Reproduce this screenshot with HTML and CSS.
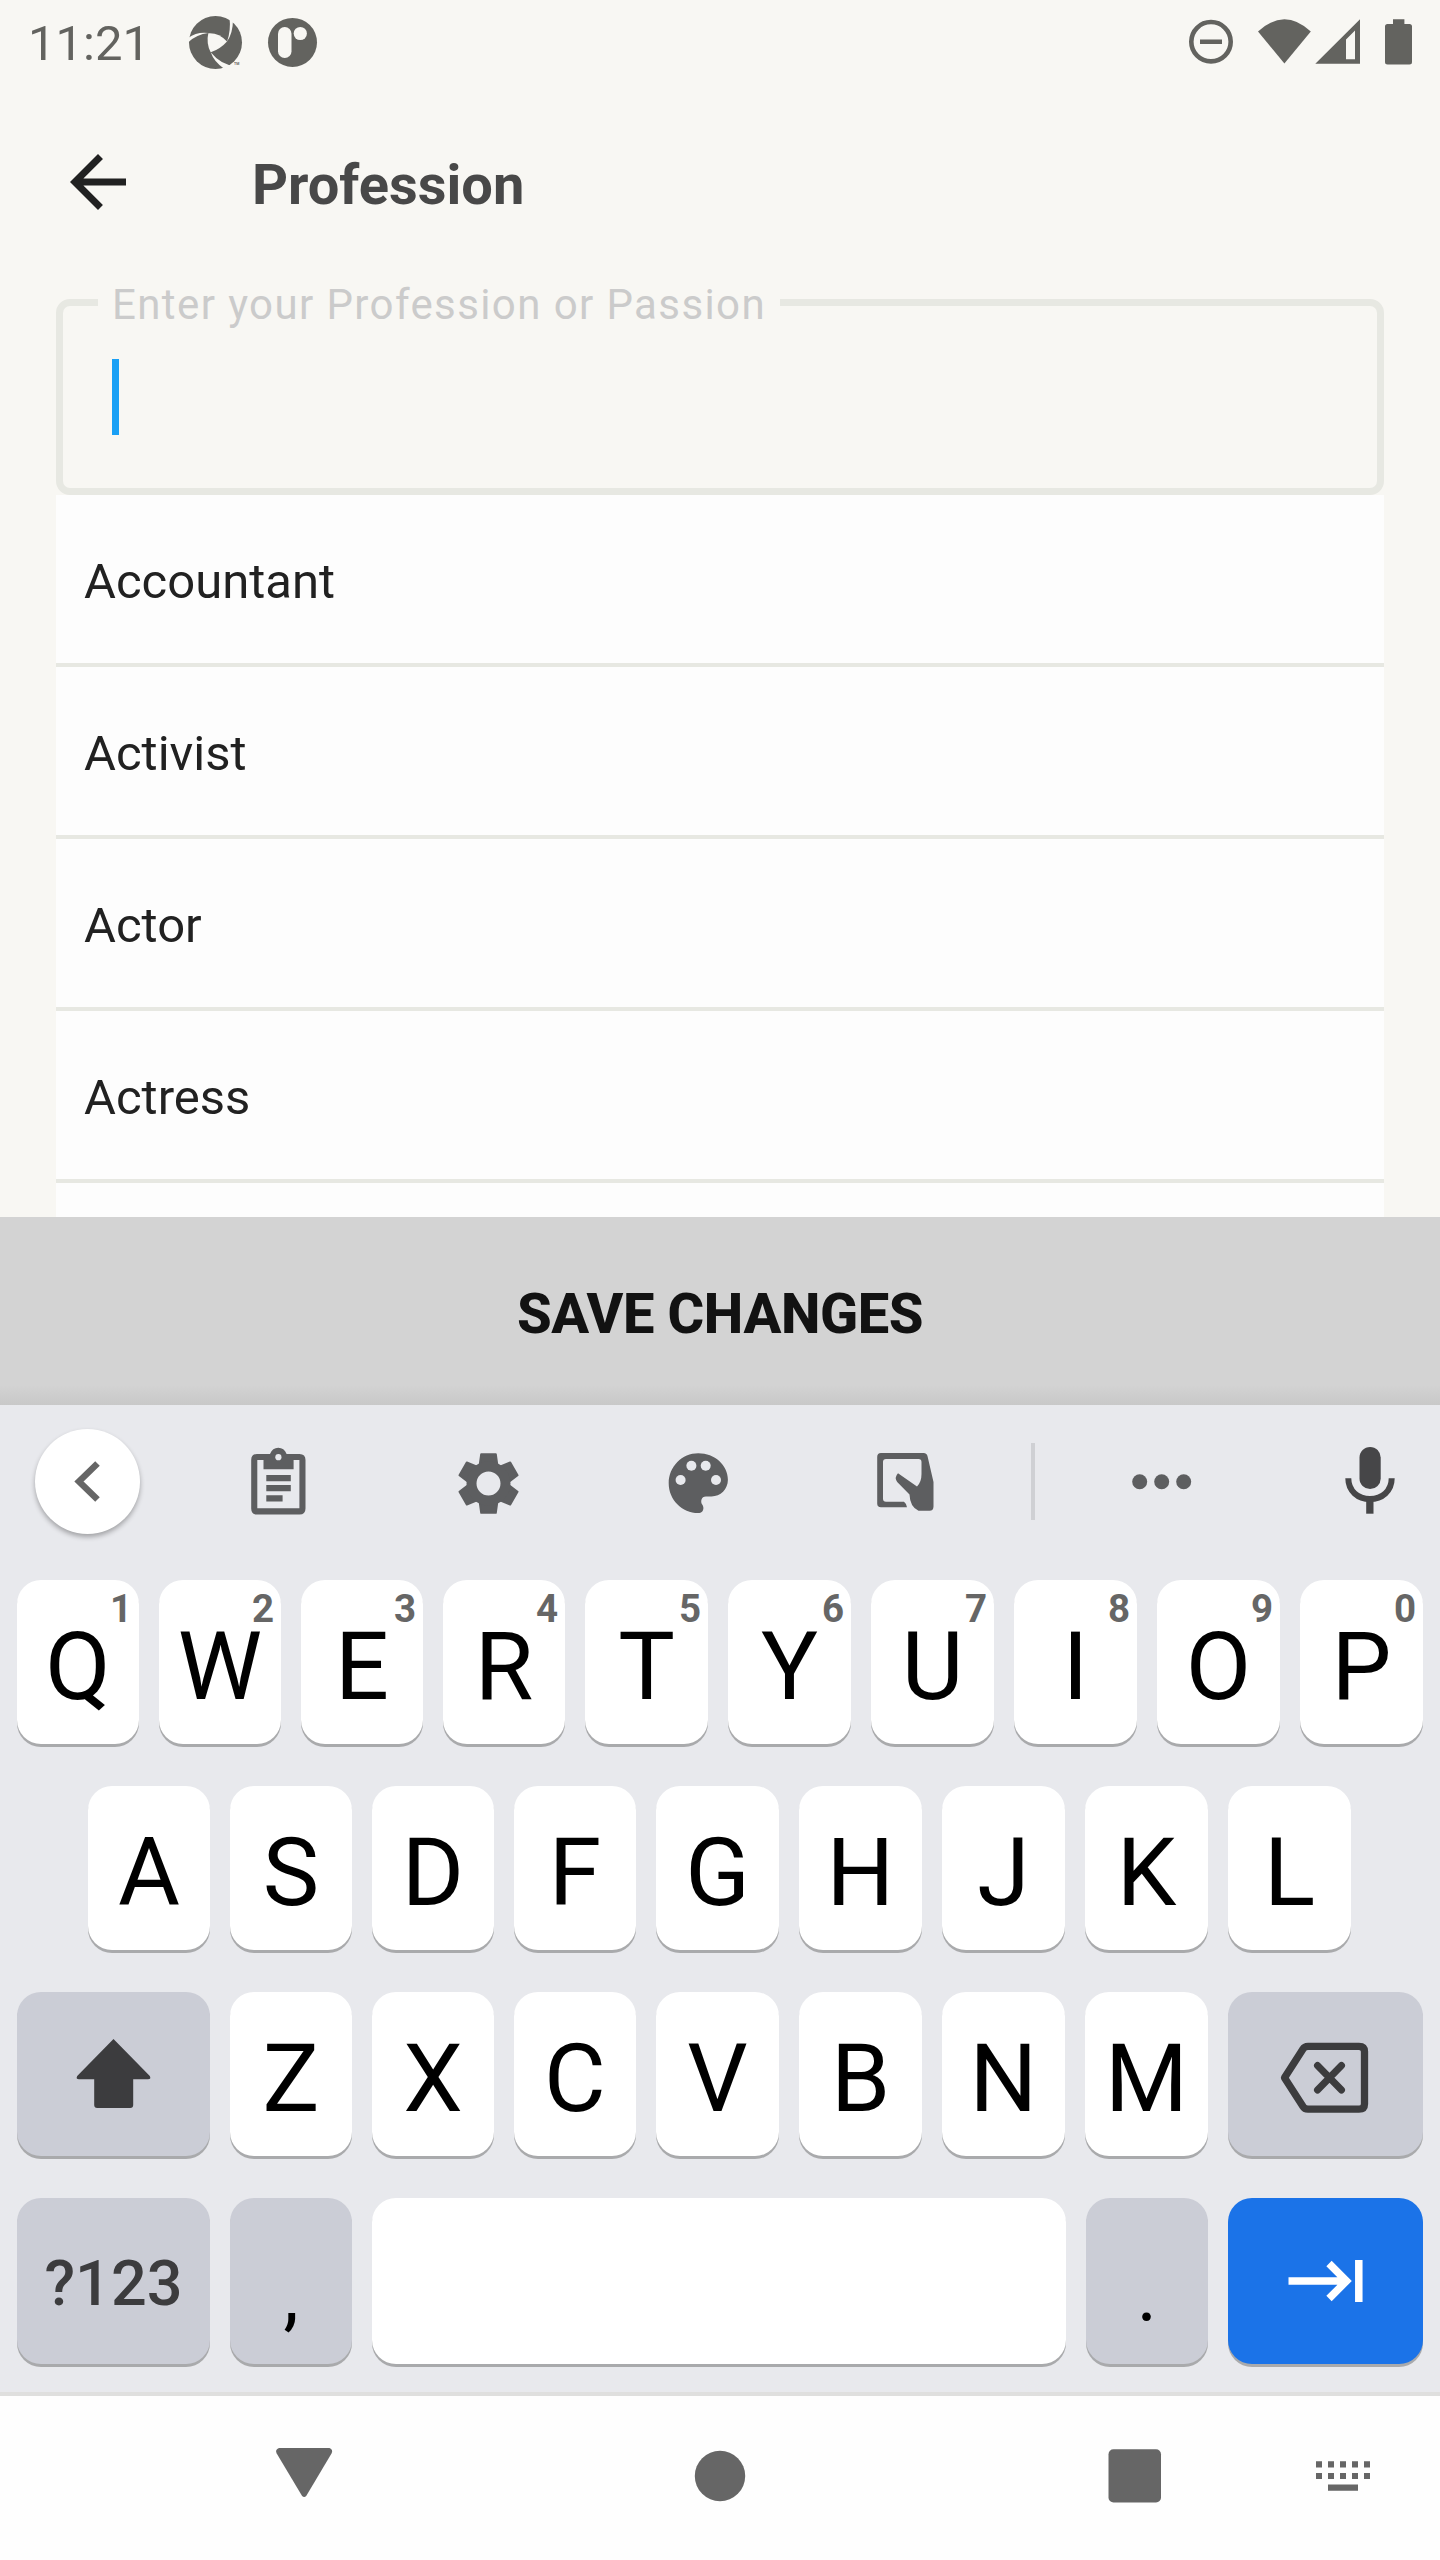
FILE: index.html
```html
<!DOCTYPE html>
<html lang="en">
<head>
<meta charset="utf-8">
<title>Profession</title>
<link rel="stylesheet" href="styles.css">
</head>
<body>
<div class="screen">
  <header class="status">
    <span class="time">11:21</span>
    <svg class="apps" viewBox="180 0 146 88" width="146" height="88">
      <circle cx="215.5" cy="42.4" r="26.5"/>
      <g class="cut">
        <path d="M208.3 33.3Q219 32.600 227 41.600Q220 49.500 210.700 52.300Q206 43.500 208.300 33.300Z"/>
        <path d="M188 38Q197 31.500 208.300 33Q197 34 188 42.500Z"/>
        <path d="M229.500 17Q231 31 227 41.700Q233 33 233 19Z"/>
        <path d="M210.700 52.300Q214 62 224.500 69L235 66Q221 65 210.700 52.300Z"/>
      </g>
      <circle cx="292.500" cy="42.400" r="24.500"/>
      <rect class="cut" x="278" y="27" width="13.500" height="31" rx="6.700"/>
      <circle class="cut" cx="300.300" cy="33.500" r="6.600"/>
      <text class="tm" x="234" y="64.500">TM</text>
    </svg>
    <svg class="system" viewBox="1180 0 240 88" width="240" height="88">
      <circle class="ring" cx="1211" cy="41.700" r="19.700"/>
      <rect x="1200" y="39.500" width="22" height="4.500"/>
      <path d="M1258 31.500Q1284.400 7 1310.800 31.500L1284.400 63.500Z"/>
      <path fill-rule="evenodd" d="M1315.300 63.700L1360 19.300V63.700ZM1346 39.500V59.300H1355V30.500Z"/>
      <path d="M1393 19.300h11.400V24H1409.500q2.500 0 2.500 2.500V62q0 2.500-2.500 2.500H1387.500q-2.500 0-2.500-2.500V26.500q0-2.500 2.500-2.500H1393Z"/>
    </svg>
  </header>

  <div class="titlebar">
    <svg class="back" viewBox="0 0 24 24" width="84" height="84"><path d="M20 11H7.830l5.590-5.590L12 4l-8 8 8 8 1.410-1.410L7.830 13H20v-2z"/></svg>
    <h1>Profession</h1>
  </div>

  <main>
    <div class="field">
      <label class="label">Enter your Profession or Passion</label>
      <div class="caret"></div>
    </div>
    <ul class="list">
      <li>Accountant</li>
      <li>Activist</li>
      <li>Actor</li>
      <li>Actress</li>
    </ul>
  </main>

  <button class="save">SAVE CHANGES</button>

  <section class="keyboard">
    <div class="tools">
      <div class="tool first"><div class="round">
        <svg viewBox="35 1429 105 105" width="105" height="105"><path class="chev" d="M97.500 1463.500L79 1481.500L97.500 1499.500"/></svg>
      </div></div>
      <div class="tool"><svg viewBox="236 1441 84 84" width="84" height="84">
        <path fill-rule="evenodd" d="M257 1454H270Q272.500 1447.700 278.300 1447.700T286.600 1454H299.500Q305.500 1454 305.500 1460V1508.500Q305.500 1514.500 299.500 1514.500H257Q251.200 1514.500 251.200 1508.500V1460Q251.200 1454 257 1454ZM257.300 1460V1508.300H299.400V1460H293.600V1469.300H263.500V1460Z"/>
        <circle class="light" cx="278.400" cy="1457.200" r="3.100"/>
        <path d="M266.300 1475h24.500v6.200h-24.500zM266.300 1485h24.500v6.200h-24.500zM266.300 1495.200h16.300v6.200h-16.300z"/>
      </svg></div>
      <div class="tool"><svg viewBox="-42.500 -42.500 84 84" width="84" height="84">
        <g class="teeth">
          <path id="tooth" d="M-9 -17L-7.300 -29.300H7.300L9 -17Z"/>
          <use href="#tooth" transform="rotate(60)"/><use href="#tooth" transform="rotate(120)"/><use href="#tooth" transform="rotate(180)"/><use href="#tooth" transform="rotate(240)"/><use href="#tooth" transform="rotate(300)"/>
        </g>
        <circle class="hub" r="17"/>
      </svg></div>
      <div class="tool"><svg viewBox="656 1441 84 84" width="84" height="84">
        <path d="M698.300 1453.300C682 1453.300 668.700 1466.700 668.700 1483.200S682 1513 698.300 1513C701.500 1513 703.400 1511 703.400 1508C703.400 1506.400 702.800 1505.300 702 1504.200C700.500 1501.800 701 1496.500 706 1496.500H711.500C720.500 1496.500 727.900 1489.200 727.900 1479.800C727.900 1465.200 714.800 1453.300 698.300 1453.300Z"/>
        <g class="light"><circle cx="680.600" cy="1480" r="5"/><circle cx="691.400" cy="1465.700" r="5"/><circle cx="705.700" cy="1465.700" r="5"/><circle cx="716" cy="1480" r="5"/></g>
      </svg></div>
      <div class="tool"><svg viewBox="866 1441 84 84" width="84" height="84">
        <path fill-rule="evenodd" d="M881 1453H923.500Q927 1453 927.600 1456.500L933.500 1482V1506.500Q933.500 1510.700 929.500 1510.700H918.500Q910 1507 909.500 1494.500L897.200 1482Q894 1477.500 898 1473.300L917 1486.500Q921.500 1482 921.500 1474V1462Q921.500 1459 918.500 1459H886Q883 1459 883 1462V1498.700Q883 1501.700 886 1501.700H904Q906.500 1503.500 907 1507.300H881Q877.200 1507.300 877.200 1503.500V1457Q877.200 1453 881 1453Z"/>
      </svg></div>
      <div class="tool divider"><span class="rule"></span></div>
      <div class="tool"><svg viewBox="1120 1441 84 84" width="84" height="84">
        <circle cx="1139.700" cy="1481.700" r="7.500"/><circle cx="1161.700" cy="1481.700" r="7.500"/><circle cx="1183.700" cy="1481.700" r="7.500"/>
      </svg></div>
      <div class="tool last"><svg class="mic" viewBox="1328 1441 84 84" width="84" height="84">
        <rect x="1359.500" y="1447" width="21.200" height="42" rx="10.600"/>
        <path class="arc" d="M1348.300 1478.300C1348.300 1491 1358 1499 1370 1499S1391.700 1491 1391.700 1478.300"/>
        <rect x="1366.200" y="1499" width="7.300" height="14.700"/>
      </svg></div>
    </div>

    <div class="row">
      <div class="key">Q<sup>1</sup></div><div class="key">W<sup>2</sup></div><div class="key">E<sup>3</sup></div><div class="key">R<sup>4</sup></div><div class="key">T<sup>5</sup></div><div class="key">Y<sup>6</sup></div><div class="key">U<sup>7</sup></div><div class="key">I<sup>8</sup></div><div class="key">O<sup>9</sup></div><div class="key">P<sup>0</sup></div>
    </div>
    <div class="row middle">
      <div class="key">A</div><div class="key">S</div><div class="key">D</div><div class="key">F</div><div class="key">G</div><div class="key">H</div><div class="key">J</div><div class="key">K</div><div class="key">L</div>
    </div>
    <div class="row">
      <div class="key mod wide icon"><svg viewBox="0 0 84 84" width="84" height="84"><path class="shift" d="M41.500 7L77.800 44Q79.500 47.300 76 47.300H61.200V73Q61.200 76 58.200 76H25.200Q22.200 76 22.200 73V47.300H7Q3.500 47.300 5.200 44Z"/></svg></div>
      <div class="key">Z</div><div class="key">X</div><div class="key">C</div><div class="key">V</div><div class="key">B</div><div class="key">N</div><div class="key">M</div>
      <div class="key mod wide right icon"><svg viewBox="1275 2032 101 84" width="101" height="84"><path class="erase" d="M1284.500 2077.700L1303 2049Q1304.500 2046.300 1308 2046.300H1359Q1364.500 2046.300 1364.500 2051.500V2104Q1364.500 2109.200 1359 2109.200H1308Q1304.500 2109.200 1303 2106.500Z"/><path class="cross" d="M1317.500 2065.500L1341.500 2090M1341.500 2065.500L1317.500 2090"/></svg></div>
    </div>
    <div class="row bottom">
      <div class="key mod wide sym">?123</div>
      <div class="key mod punct">,</div>
      <div class="key space"></div>
      <div class="key mod punct">.</div>
      <div class="key enter wide right icon"><svg viewBox="1283.500 2239 84 84" width="84" height="84"><path class="tab" d="M1288 2281H1345M1328.500 2263.500L1346 2281L1328.500 2298.500M1358.300 2260V2302"/></svg></div>
    </div>
  </section>

  <nav class="nav">
    <svg viewBox="262 2436 84 84" width="84" height="84"><path d="M279 2448H329.500Q333.500 2449.500 331.500 2453.500L306.500 2495.500Q304.200 2498.500 301.800 2495.500L276.700 2453.500Q274.700 2449.500 279 2448Z"/></svg>
    <svg viewBox="678 2436 84 84" width="84" height="84"><circle cx="720" cy="2476" r="25.200"/></svg>
    <svg viewBox="1093 2436 84 84" width="84" height="84"><rect x="1108.500" y="2449.300" width="52.500" height="53.200" rx="5"/></svg>
    <svg viewBox="1301 2436 84 84" width="84" height="84"><path d="M1316 2461.300h6v6.200h-6zm12 0h6v6.200h-6zm12 0h6v6.200h-6zm12 0h6v6.200h-6zm12 0h6v6.200h-6zM1316 2473h6v6h-6zm12 0h6v6h-6zm12 0h6v6h-6zm12 0h6v6h-6zm12 0h6v6h-6zM1328 2484.500h30v6.200h-30z"/></svg>
  </nav>
</div>
</body>
</html>
```
FILE: styles.css
```css
* { box-sizing: border-box; }
body {
  margin: 0;
  font-family: Roboto, "Liberation Sans", sans-serif;
  background: #f8f7f3;
}
svg { display: block; flex: none; }

.screen {
  width: 1440px;
  height: 2560px;
  display: flex;
  flex-direction: column;
  overflow: hidden;
}

/* Status bar */
.status {
  height: 88px;
  display: flex;
  align-items: center;
  padding: 0 20px 0 28px;
  color: #63635f;
}
.status svg { fill: #63635f; }
.status .cut { fill: #f8f7f3; }
.status .ring { fill: none; stroke: #63635f; stroke-width: 4.6; }
.time { width: 152px; font-size: 49px; line-height: 88px; white-space: nowrap; }
.tm { font-size: 3.500px; font-weight: 700; }
.system { margin-left: auto; }

/* Title bar */
.titlebar {
  height: 188px;
  display: flex;
  align-items: center;
  padding-left: 56px;
}
.back { fill: #212121; }
h1 {
  margin: 6px 0 0 112px;
  font-size: 56px;
  line-height: 66px;
  font-weight: 700;
  color: #484848;
}

/* Text field and suggestions */
main { padding: 23px 56px 0; height: 941px; overflow: hidden; }
.field {
  position: relative;
  height: 196px;
  border: 7px solid #e7e8e2;
  border-radius: 14px;
  padding: 53px 49px 0;
}
.label {
  position: absolute;
  left: 35px;
  top: -26px;
  width: 682px;
  padding-left: 14px;
  background: #f8f7f3;
  font-size: 42px;
  line-height: 50px;
  letter-spacing: 1.400px;
  color: #cbcbcb;
  white-space: nowrap;
}
.caret { width: 7px; height: 76px; background: #1aa0f5; }
.list {
  margin: 0;
  padding: 0;
  list-style: none;
  height: 722px;
  background: #fdfdfd;
}
.list li {
  height: 172px;
  padding: 5px 28px 0;
  border-bottom: 4px solid #e7e8e2;
  font-size: 49px;
  line-height: 163px;
  color: #212121;
}

.save {
  height: 188px;
  border: 0;
  padding: 6px 0 0;
  background: linear-gradient(#d3d3d3 0, #d3d3d3 168px, #c8c8c8 188px);
  font: 800 56px/66px Roboto, "Liberation Sans", sans-serif;
  letter-spacing: -0.4px;
  color: #121212;
}

/* Keyboard */
.keyboard { height: 987px; background: #e8e9ed; }
.tools {
  height: 156px;
  display: grid;
  grid-template-columns: 173px 210px 210px 210px 210px 40px 217px 170px;
}
.tool { display: flex; align-items: center; justify-content: center; fill: #5d5e60; }
.tool.first { padding: 0 0 3px 2px; }
.tool.last { padding-left: 30px; }
.tool.divider { padding-bottom: 3px; }
.round { border-radius: 50%; background: #fff; box-shadow: 0 3px 5px rgba(0, 0, 0, .3); }
.chev { fill: none; stroke: #666; stroke-width: 6.500; }
.light { fill: #e8e9ed; }
.teeth { stroke: #5d5e60; stroke-width: 2; stroke-linejoin: round; }
.hub { fill: #e8e9ed; stroke: #5d5e60; stroke-width: 10; }
.rule { width: 4px; height: 77px; background: #cfd0d4; }
.mic { fill: #464648; }
.arc { fill: none; stroke: #464648; stroke-width: 6; }

.row {
  display: flex;
  gap: 20px;
  height: 164px;
  margin: 0 17px 42px;
}
.tools + .row { margin-top: 19px; }
.row.middle { margin-left: 88px; }
.row.bottom { height: 166px; margin-bottom: 0; }
.key {
  position: relative;
  flex: 0 0 123px;
  display: flex;
  align-items: center;
  justify-content: center;
  padding-top: 9px;
  border-radius: 24px;
  background: #fff;
  box-shadow: 0 3px 0 #a9aaac;
  font-size: 95px;
  line-height: 112px;
  color: #000;
}
.key:nth-child(-n+4) { flex-basis: 122px; }
.key sup {
  position: absolute;
  right: 7px;
  top: 6px;
  font-size: 38.500px;
  line-height: 45px;
  font-weight: 700;
  color: #666;
}
.row .key.mod { background: #cbcdd6; }
.row .key.wide { flex: 0 0 193px; }
.row .key.wide.right { flex-basis: 195px; }
.row .key.icon { padding-top: 0; }
.row .key.sym { font-size: 63px; font-weight: 500; color: #3c3c3e; padding-top: 5px; }
.row .key.punct { flex: 0 0 122px; font-size: 77px; padding-top: 27px; }
.row .key.space { flex: 1 1 0; }
.row .key.enter { background: #1b73e8; }
.shift { fill: #3c3c3e; }
.erase { fill: none; stroke: #3c3c3e; stroke-width: 7.300; stroke-linejoin: round; }
.cross { fill: none; stroke: #3c3c3e; stroke-width: 7; stroke-linecap: round; }
.tab { fill: none; stroke: #fff; stroke-width: 7.500; }

/* Navigation bar */
.nav {
  height: 168px;
  display: flex;
  align-items: center;
  border-top: 4px solid #dfdfde;
  padding-left: 262px;
  background: #fefefe;
  fill: #666;
}
.nav svg:nth-child(2) { margin-left: 332px; }
.nav svg:nth-child(3) { margin-left: 331px; }
.nav svg:nth-child(4) { margin-left: 124px; }
```
